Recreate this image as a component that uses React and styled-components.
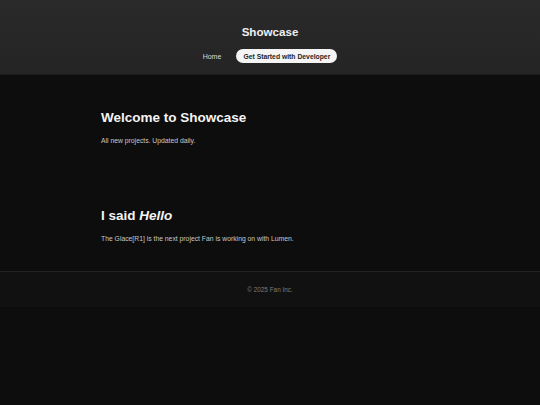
import React from "react";
import styled, { createGlobalStyle } from "styled-components";

const GlobalStyle = createGlobalStyle`
    html, body {
        margin: 0;
        padding: 0;
        background: #0d0d0d;
        font-family: "Liberation Sans", Arial, sans-serif;
    }
`

const App = () => {
    return (
        <Page>
            <GlobalStyle />
            <Header>
                <Title>Showcase</Title>
                <Nav>
                    <NavLink href="#">Home</NavLink>
                    <CtaButton>Get Started with Developer</CtaButton>
                </Nav>
            </Header>

            <Main>
                <Section>
                    <Heading>Welcome to Showcase</Heading>
                    <Text>All new projects. Updated daily.</Text>
                </Section>
                <Section>
                    <Heading>I said <em>Hello</em></Heading>
                    <Text>The Glace[R1] is the next project Fan is working on with Lumen.</Text>
                </Section>
            </Main>

            <Footer>
                <FooterText>© 2025 Fan Inc.</FooterText>
            </Footer>
        </Page>
    )
};

/* --------------------------------------------------- STYLES --------------------------------------------------- */

const Page = styled.div `
    display: flex;
    flex-direction: column;
    color: #f2f2f2;
`

const Header = styled.header `
    display: flex;
    flex-direction: column;
    align-items: center;
    background: linear-gradient(#2a2a2a, #242424);
    border-bottom: 1px solid #1c1c1c;
    height: 75px;
    box-sizing: border-box;
    padding-top: 24px;
`

const Title = styled.h1 `
    margin: 0;
    font-size: 11.6px;
    line-height: 16px;
    font-weight: 700;
    color: #f0f0f0;
`

const Nav = styled.nav `
    display: flex;
    align-items: center;
    gap: 15px;
    margin-top: 9px;
`

const NavLink = styled.a `
    color: #d8d8d8;
    text-decoration: none;
    font-size: 7px;
`

const CtaButton = styled.button `
    background: #f4f4f4;
    color: #1e1e1e;
    border: none;
    border-radius: 8px;
    font-family: inherit;
    font-weight: 700;
    font-size: 6.8px;
    height: 14px;
    width: 101px;
    padding: 0;
`

const Main = styled.main `
    display: flex;
    flex-direction: column;
    gap: 61px;
    width: 338px;
    margin: 0 auto;
    padding: 34px 0 27px;
`

const Section = styled.section `
    display: flex;
    flex-direction: column;
    gap: 9px;
`

const Heading = styled.h2 `
    margin: 0;
    font-size: 13.5px;
    line-height: 18px;
    font-weight: 700;
    color: #f4f4f4;

    em {
        font-style: italic;
    }
`

const Text = styled.p `
    margin: 0;
    font-size: 6.8px;
    line-height: 10px;
    color: #c8c8c8;
`

const Footer = styled.footer `
    display: flex;
    justify-content: center;
    align-items: center;
    background: #111111;
    border-top: 1px solid #222;
    height: 35px;
`

const FooterText = styled.p `
    margin: 0;
    font-size: 6.4px;
    color: #7c7c7c;
`

export default App;
